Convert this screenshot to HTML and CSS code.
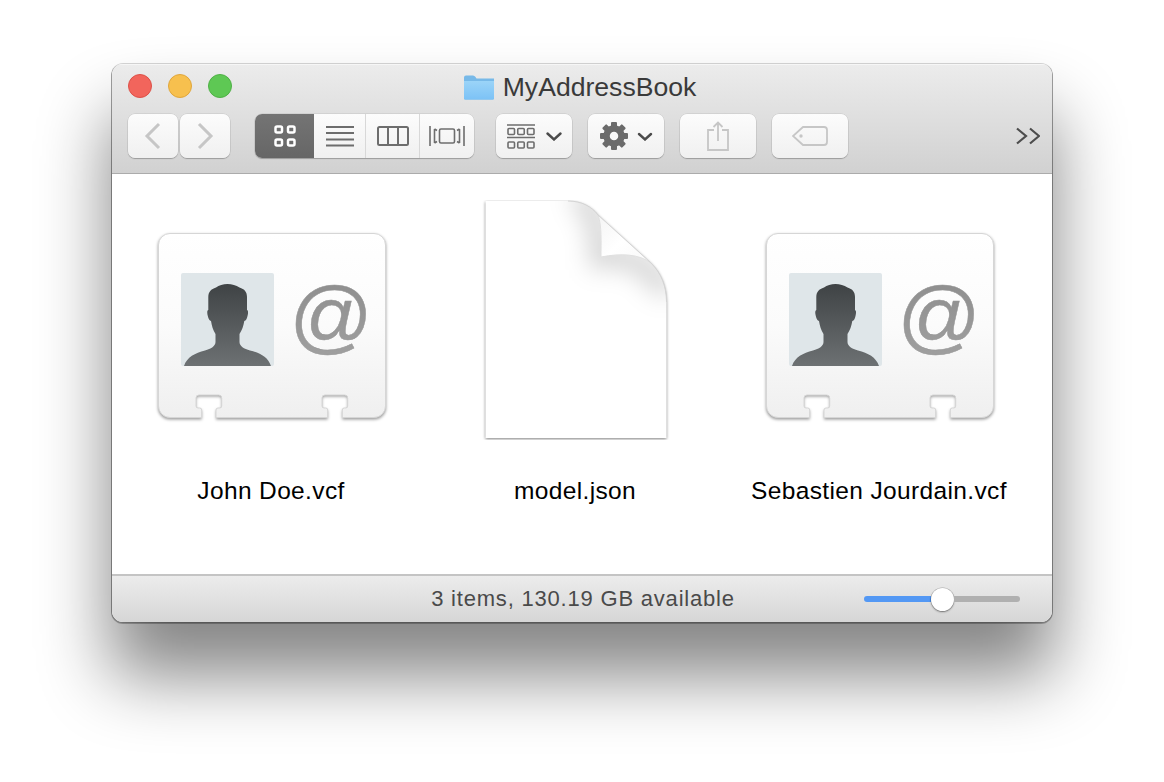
FILE: index.html
```html
<!DOCTYPE html>
<html lang="en">
<head>
<meta charset="utf-8">
<title>MyAddressBook</title>
<link rel="stylesheet" href="styles.css">
</head>
<body>
<svg class="defs" width="0" height="0" aria-hidden="true">
  <defs>
    <linearGradient id="cardFill" x1="0" y1="0" x2="0" y2="1">
      <stop offset="0" stop-color="#ffffff"/>
      <stop offset="0.5" stop-color="#fbfbfb"/>
      <stop offset="1" stop-color="#efefef"/>
    </linearGradient>
    <linearGradient id="manFill" x1="0" y1="0" x2="0" y2="1">
      <stop offset="0" stop-color="#3f4345"/>
      <stop offset="1" stop-color="#6d7173"/>
    </linearGradient>
    <linearGradient id="atFill" x1="0" y1="0" x2="0" y2="1">
      <stop offset="0" stop-color="#8c8c8c"/>
      <stop offset="1" stop-color="#a0a0a0"/>
    </linearGradient>
    <linearGradient id="folderFill" x1="0" y1="0" x2="0" y2="1">
      <stop offset="0" stop-color="#9bd4f8"/>
      <stop offset="1" stop-color="#7cc2f6"/>
    </linearGradient>
    <linearGradient id="flapFill" x1="0" y1="0" x2="1" y2="1">
      <stop offset="0" stop-color="#f4f4f4"/>
      <stop offset="0.5" stop-color="#ffffff"/>
      <stop offset="1" stop-color="#f8f8f8"/>
    </linearGradient>
    <filter id="soft" x="-30%" y="-30%" width="160%" height="160%"><feGaussianBlur stdDeviation="12"/></filter>
    <filter id="softer" x="-10%" y="-10%" width="120%" height="120%"><feGaussianBlur stdDeviation="1.6"/></filter>
    <clipPath id="pageClip"><path d="M30.500 1H113C127 1 137 7 143 15L196 63C206 73 211.500 86 211.500 102V238H30.500Z"/></clipPath>
    <symbol id="vcard" viewBox="0 0 240 240">
      <path class="card-shadow" d="M19 33H223a12 12 0 0 1 12 12V206a12 12 0 0 1-12 12H191.300V210q0-2 2-2h1.400a2 2 0 0 0 2-2V198a3 3 0 0 0-3-3H174a3 3 0 0 0-3 3V206a2 2 0 0 0 2 2h1.700q2 0 2 2V218H65V210q0-2 2-2h1.700a2 2 0 0 0 2-2V198a3 3 0 0 0-3-3H48a3 3 0 0 0-3 3V206a2 2 0 0 0 2 2h1.700q2 0 2 2V218H19a12 12 0 0 1-12-12V45a12 12 0 0 1 12-12Z" filter="url(#softer)" transform="translate(0 1.500)"/>
      <path class="card-body" d="M19 33.500H223a11.500 11.500 0 0 1 11.500 11.500V206a11.500 11.500 0 0 1-11.500 11.500H191.300V210q0-2 2-2h1.400a2 2 0 0 0 2-2V198a3 3 0 0 0-3-3H174a3 3 0 0 0-3 3V206a2 2 0 0 0 2 2h1.700q2 0 2 2V217.500H65V210q0-2 2-2h1.700a2 2 0 0 0 2-2V198a3 3 0 0 0-3-3H48a3 3 0 0 0-3 3V206a2 2 0 0 0 2 2h1.700q2 0 2 2V217.500H19a11.500 11.500 0 0 1-11.500-11.500V45a11.500 11.500 0 0 1 11.500-11.500Z"/>
      <rect class="card-photo" x="30" y="73" width="93" height="93" rx="2"/>
      <path class="card-man" d="M76.500 84C72 84 68 85.500 65 87.500C60 89 57.300 92 57.300 97V110C56 110.500 56 113 56.800 116C57.500 119 58.500 120.500 60 121C60.800 126 62 130 64.500 134V142C64.500 146 60 149 54 150.500C44 153 36 157 33 166H120C117 157 109 153 99 150.500C93 149 88.500 146 88.500 142V134C91 130 92.500 126 93.300 121C95 120.500 95.800 119 96.500 116C97.300 113 97.300 110.500 96 110V97C96 92 93.500 89 88.500 87.500C85 85.500 81 84 76.500 84Z"/>
      <text class="card-at" x="180" y="144">@</text>
    </symbol>
  </defs>
</svg>

<main class="window">
  <header class="titlebar">
    <div class="title-row">
      <div class="lights">
        <span class="light light-red"></span>
        <span class="light light-yellow"></span>
        <span class="light light-green"></span>
      </div>
      <div class="title">
        <svg class="folder" width="32" height="26" viewBox="0 0 32 26">
          <path class="folder-back" d="M1 3.500Q1 1.500 3 1.500H10Q11.500 1.500 12.500 3L13.500 4.500H31V24.500Q31 25.500 30 25.500H2Q1 25.500 1 24.500Z"/>
          <path class="folder-front" d="M1 7H31V24Q31 25.500 29.500 25.500H2.500Q1 25.500 1 24Z"/>
        </svg>
        <span class="title-text">MyAddressBook</span>
      </div>
    </div>
    <div class="toolbar">
      <div class="nav">
        <button class="tool tool-nav"><svg class="ic-dim" width="18" height="28" viewBox="0 0 18 28"><path d="M15 2 3 14 15 26"/></svg></button>
        <button class="tool tool-nav"><svg class="ic-dim" width="18" height="28" viewBox="0 0 18 28"><path d="M3 2 15 14 3 26"/></svg></button>
      </div>
      <div class="views">
        <button class="view view-icons"><svg class="ic-white" width="22" height="22" viewBox="0 0 22 22"><rect x="1.500" y="1.500" width="6.500" height="6" rx="1.500"/><rect x="14" y="1.500" width="6.500" height="6" rx="1.500"/><rect x="1.500" y="14.500" width="6.500" height="6" rx="1.500"/><rect x="14" y="14.500" width="6.500" height="6" rx="1.500"/></svg></button>
        <button class="view view-list"><svg class="ic-grey" width="28" height="22" viewBox="0 0 28 22"><path d="M0 2H28M0 8H28M0 14.500H28M0 20.500H28"/></svg></button>
        <button class="view view-cols"><svg class="ic-grey" width="32" height="20" viewBox="0 0 32 20"><rect x="1" y="1" width="30" height="18" rx="1.500"/><path d="M11 1V19M21 1V19"/></svg></button>
        <button class="view view-flow"><svg class="ic-grey ic-thin" width="36" height="20" viewBox="0 0 36 20"><rect x="10.500" y="3" width="15" height="14" rx="1.500"/><path d="M1 0V20M5.500 3V17M30.500 3V17M35 0V20M5.500 3 8 4.500M5.500 17 8 15.500M30.500 3 28 4.500M30.500 17 28 15.500"/></svg></button>
      </div>
      <button class="tool tool-wide tool-arrange">
        <svg class="ic-grey ic-thin" width="28" height="25" viewBox="0 0 28 25"><path d="M0 1H28M0 13.500H28"/><rect x="1" y="4.500" width="6.500" height="6" rx="1"/><rect x="10.750" y="4.500" width="6.500" height="6" rx="1"/><rect x="20.500" y="4.500" width="6.500" height="6" rx="1"/><rect x="1" y="18" width="6.500" height="6" rx="1"/><rect x="10.750" y="18" width="6.500" height="6" rx="1"/><rect x="20.500" y="18" width="6.500" height="6" rx="1"/></svg>
        <svg class="ic-dark" width="16" height="9" viewBox="0 0 16 9"><path d="M1.500 1.500 8 7.500 14.500 1.500"/></svg>
      </button>
      <button class="tool tool-wide tool-gear">
        <svg width="28" height="28" viewBox="0 0 28 28">
          <g class="gear-teeth"><rect x="11" y="0" width="6" height="28" rx="1"/><rect x="11" y="0" width="6" height="28" rx="1" transform="rotate(45 14 14)"/><rect x="11" y="0" width="6" height="28" rx="1" transform="rotate(90 14 14)"/><rect x="11" y="0" width="6" height="28" rx="1" transform="rotate(135 14 14)"/></g>
          <circle class="gear-ring" cx="14" cy="14" r="7.500"/>
        </svg>
        <svg class="ic-dark" width="16" height="9" viewBox="0 0 16 9"><path d="M2 2 8 7.500 14 2"/></svg>
      </button>
      <button class="tool tool-wide"><svg class="ic-dim ic-fine" width="22" height="30" viewBox="0 0 22 30"><path d="M7 9H1V29H21V9H15M11 20V1.500M6.500 6 11 1.500 15.500 6"/></svg></button>
      <button class="tool tool-wide"><svg class="ic-dim ic-fine" width="36" height="20" viewBox="0 0 36 20"><path d="M11 1H32Q35 1 35 4V16Q35 19 32 19H11L1 10Z"/><circle cx="9" cy="10" r="0.800"/></svg></button>
      <svg class="more" width="24" height="18" viewBox="0 0 24 18"><path d="M1 1.500 10 9 1 16.500M14 1.500 23 9 14 16.500"/></svg>
    </div>
  </header>

  <section class="files">
    <figure class="file">
      <svg class="file-icon" width="240" height="240"><use href="#vcard"/></svg>
      <figcaption class="file-name">John Doe.vcf</figcaption>
    </figure>
    <figure class="file">
      <svg class="file-icon" width="240" height="240" viewBox="0 0 240 240">
        <path class="doc-shadow" d="M30.500 1H113C127 1 137 7 143 15L196 63C206 73 211.500 86 211.500 102V238H30.500Z" filter="url(#softer)" transform="translate(0 1)"/>
        <path class="doc-page" d="M30.500 1H113C127 1 137 7 143 15L196 63C206 73 211.500 86 211.500 102V238H30.500Z"/>
        <g clip-path="url(#pageClip)">
          <path class="doc-top-shade" d="M20 -6H120" filter="url(#soft)"/>
          <path class="doc-fold-shade" d="M122 -8C136 6 146 20 146 57C172 52 190 62 214 92" filter="url(#soft)"/>
          <path class="doc-flap" d="M143 15L196 63C184 54 166 53 146 57C146 42 147 26 143 15Z"/>
          <path class="doc-flap-edge" d="M143 15C147 26 146 42 146 57C166 53 184 54 196 63"/>
        </g>
        <path class="doc-edge" d="M113 1C127 1 137 7 143 15L196 63C206 73 211.500 86 211.500 102"/>
      </svg>
      <figcaption class="file-name">model.json</figcaption>
    </figure>
    <figure class="file">
      <svg class="file-icon" width="240" height="240"><use href="#vcard"/></svg>
      <figcaption class="file-name">Sebastien Jourdain.vcf</figcaption>
    </figure>
  </section>

  <footer class="statusbar">
    <span></span>
    <span class="status-text">3 items, 130.19 GB available</span>
    <div class="slider">
      <div class="track-on"></div>
      <div class="thumb"></div>
      <div class="track-off"></div>
    </div>
  </footer>
</main>
</body>
</html>
```
FILE: styles.css
```css
* { box-sizing: border-box; }

html, body { height: 100%; }

body {
  margin: 0;
  padding: 64px 0 0 112px;
  background: #fff;
  font-family: "Liberation Sans", Arial, sans-serif;
  overflow: hidden;
}

.defs { position: absolute; }

.window {
  width: 940px;
  height: 558px;
  display: flex;
  flex-direction: column;
  background: #fff;
  border-radius: 11px;
  overflow: hidden;
  box-shadow: 0 0 0 1px rgba(0, 0, 0, .16), 0 1px 0 1px rgba(0, 0, 0, .25), 0 52px 70px 2px rgba(0, 0, 0, .48);
}

/* title bar */
.titlebar {
  height: 110px;
  flex: none;
  display: flex;
  flex-direction: column;
  background: linear-gradient(#ececec, #d1d1d1);
  border-bottom: 1px solid #ababab;
  box-shadow: inset 0 1px 0 #f6f6f6;
}

.title-row {
  height: 50px;
  flex: none;
  position: relative;
  display: flex;
  align-items: center;
  justify-content: center;
  padding: 0 5px 6px 0;
}

.lights {
  position: absolute;
  left: 16px;
  top: 10px;
  display: flex;
  gap: 16px;
}

.light {
  width: 24px;
  height: 24px;
  border-radius: 50%;
  border: 1px solid;
}
.light-red { background: #f2655c; border-color: #dc5148; }
.light-yellow { background: #f7c04e; border-color: #dfa63c; }
.light-green { background: #5ec854; border-color: #4fb046; }

.title {
  display: flex;
  align-items: center;
  gap: 8px;
  margin-top: 1px;
}
.folder-back { fill: #77b9e8; }
.folder-front { fill: url(#folderFill); }
.title-text {
  font-size: 26.6px;
  line-height: 32px;
  color: #3a3a3a;
}

/* toolbar */
.toolbar {
  display: flex;
  align-items: stretch;
  height: 44px;
  padding: 0 12px 0 16px;
}

.nav { display: flex; gap: 2px; margin-right: 25px; }

button {
  padding: 0;
  font: inherit;
  display: flex;
  align-items: center;
  justify-content: center;
}

.tool {
  height: 44px;
  border: 0;
  border-radius: 7px;
  background: linear-gradient(#fcfcfc, #f0f0f0);
  box-shadow: 0 0 0 .5px rgba(0, 0, 0, .12), 0 1px 1px rgba(0, 0, 0, .22);
}
.tool-nav { width: 50px; }
.tool-wide { width: 76px; margin-left: 16px; }
.tool-arrange { margin-left: 22px; gap: 11px; }
.tool-gear { gap: 9px; }

.views {
  width: 219px;
  display: flex;
  border-radius: 7px;
  overflow: hidden;
  background: linear-gradient(#fcfcfc, #f0f0f0);
  box-shadow: 0 0 0 .5px rgba(0, 0, 0, .12), 0 1px 1px rgba(0, 0, 0, .22);
}
.view {
  border: 0;
  background: none;
  border-left: 1px solid #d8d8d8;
}
.view-icons { width: 59px; border-left: 0; background: linear-gradient(#747474, #666); }
.view-list { width: 51px; border-left: 0; }
.view-cols { width: 54px; }
.view-flow { width: 55px; }

.ic-dim, .ic-grey, .ic-white, .ic-dark, .more { fill: none; stroke-linecap: round; }
.ic-dim { stroke: #c6c6c6; stroke-width: 3; stroke-linecap: butt; }
.ic-fine { stroke-width: 1.8; }
.ic-grey { stroke: #6d6d6d; stroke-width: 2; stroke-linecap: butt; }
.ic-thin { stroke-width: 1.6; }
.ic-white { stroke: #fff; stroke-width: 2.500; }
.ic-dark { stroke: #4b4b4b; stroke-width: 2.400; }
.ic-dim circle { fill: #c6c6c6; }

.gear-teeth { fill: #6b6b6b; }
.gear-ring { fill: #f8f8f8; stroke: #6b6b6b; stroke-width: 6.500; }

.more {
  align-self: center;
  margin-left: auto;
  stroke: #4d4d4d;
  stroke-width: 2.200;
  stroke-linecap: butt;
}

/* files */
.files {
  flex: 1;
  padding: 26px 7px 0;
  display: grid;
  grid-template-columns: repeat(3, 304px);
  align-content: start;
  background: #fff;
}
.file {
  margin: 0;
  display: flex;
  flex-direction: column;
  align-items: center;
}
.file-icon { display: block; }
.file-name {
  margin-top: 37px;
  font-size: 24.5px;
  letter-spacing: .36px;
  line-height: 28px;
  color: #000;
  white-space: nowrap;
}

.card-shadow { fill: rgba(0, 0, 0, .4); }
.card-body { fill: url(#cardFill); stroke: #d6d6d6; stroke-width: 1; }
.card-photo { fill: #dfe6e9; }
.card-man { fill: url(#manFill); }
.card-at {
  font-family: "Liberation Sans", Arial, sans-serif;
  font-size: 82px;
  fill: url(#atFill);
  stroke: #969696;
  stroke-width: .5;
  text-anchor: middle;
}

.doc-shadow { fill: rgba(0, 0, 0, .5); }
.doc-page { fill: #fff; }
.doc-top-shade { fill: none; stroke: rgba(0, 0, 0, .07); stroke-width: 14; }
.doc-fold-shade { fill: none; stroke: rgba(0, 0, 0, .17); stroke-width: 22; }
.doc-flap { fill: url(#flapFill); }
.doc-flap-edge { fill: none; stroke: #e0e0e0; stroke-width: 1; }
.doc-edge { fill: none; stroke: #d4d4d4; stroke-width: 1; }

/* status bar */
.statusbar {
  height: 48px;
  flex: none;
  display: grid;
  grid-template-columns: 1fr auto 1fr;
  align-items: center;
  padding-right: 30px;
  padding-left: 32px;
  background: linear-gradient(#ececec, #d6d6d6);
  border-top: 2px solid #c4c4c4;
}
.status-text {
  font-size: 22px;
  letter-spacing: .8px;
  color: #4a4a4a;
  white-space: nowrap;
}
.slider {
  justify-self: end;
  width: 156px;
  margin-right: 2px;
  display: flex;
  align-items: center;
}
.track-on { width: 67px; height: 6px; border-radius: 3px 0 0 3px; background: #5398f4; }
.track-off { flex: 1; height: 6px; border-radius: 0 3px 3px 0; background: #b0b0b0; }
.thumb {
  width: 23px;
  height: 23px;
  border-radius: 50%;
  background: #fff;
  box-shadow: 0 0 0 .5px rgba(0, 0, 0, .25), 0 1px 2px rgba(0, 0, 0, .4);
}
```
